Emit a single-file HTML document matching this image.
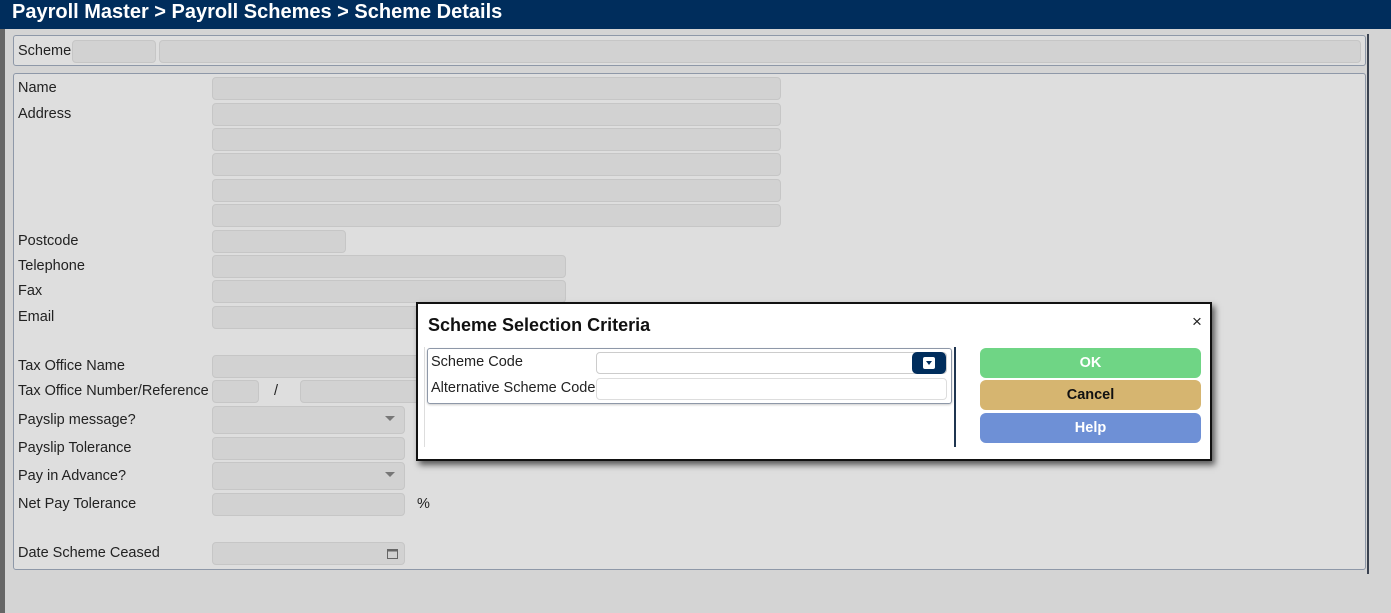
<!DOCTYPE html>
<html><head><meta charset="utf-8"><style>
*{box-sizing:border-box;margin:0;padding:0}
body{width:1391px;height:613px;background:#d4d4d4;font-family:"Liberation Sans",sans-serif;font-size:14.5px;color:#222;position:relative;overflow:hidden}
.a{position:absolute}
.hdr{left:0;top:0;width:1391px;height:29px;background:#002d5c;color:#fff;font-weight:bold;font-size:20px;padding:1px 0 0 12px}
.lstrip{left:0;top:29px;width:5px;height:584px;background:#666}
.vline{left:1367px;top:34px;width:2px;height:540px;background:#3a4250}
.box{background:#dedede;border:1px solid #8e98a8;border-radius:3px}
.f{position:absolute;background:#d2d2d2;border:1px solid #c6c6c6;border-radius:4px;height:23px}
.l{position:absolute;left:18px}
.arr{position:absolute;right:9px;top:9px;border-left:5px solid transparent;border-right:5px solid transparent;border-top:5px solid #777}
.dlg{left:416px;top:302px;width:796px;height:159px;background:#fff;border:2px solid #111;box-shadow:3px 4px 6px rgba(0,0,0,.6)}
.btn{position:absolute;left:562px;width:221px;height:30px;border-radius:6px;text-align:center;font-weight:bold;font-size:14.5px;line-height:30px}
</style></head><body>
<div class="a hdr">Payroll Master &gt; Payroll Schemes &gt; Scheme Details</div>
<div class="a lstrip"></div>
<div class="a vline"></div>
<div class="a box" style="left:13px;top:35px;width:1353px;height:31px"></div>
<div class="l" style="top:43px">Scheme</div>
<div class="f" style="left:72px;top:40px;width:84px"></div>
<div class="f" style="left:159px;top:40px;width:1202px"></div>
<div class="a box" style="left:13px;top:73px;width:1353px;height:497px"></div>
<div class="l" style="top:80px">Name</div>
<div class="l" style="top:106px">Address</div>
<div class="f" style="left:212px;top:77px;width:569px"></div>
<div class="f" style="left:212px;top:103px;width:569px"></div>
<div class="f" style="left:212px;top:128px;width:569px"></div>
<div class="f" style="left:212px;top:153px;width:569px"></div>
<div class="f" style="left:212px;top:179px;width:569px"></div>
<div class="f" style="left:212px;top:204px;width:569px"></div>
<div class="l" style="top:233px">Postcode</div>
<div class="f" style="left:212px;top:230px;width:134px"></div>
<div class="l" style="top:258px">Telephone</div>
<div class="f" style="left:212px;top:255px;width:354px"></div>
<div class="l" style="top:283px">Fax</div>
<div class="f" style="left:212px;top:280px;width:354px"></div>
<div class="l" style="top:309px">Email</div>
<div class="f" style="left:212px;top:306px;width:354px"></div>
<div class="l" style="top:358px">Tax Office Name</div>
<div class="f" style="left:212px;top:355px;width:354px"></div>
<div class="l" style="top:383px">Tax Office Number/Reference</div>
<div class="f" style="left:212px;top:380px;width:47px"></div>
<div class="a" style="left:274px;top:383px">/</div>
<div class="f" style="left:300px;top:380px;width:266px"></div>
<div class="l" style="top:412px">Payslip message?</div>
<div class="f" style="left:212px;top:406px;width:193px;height:28px"><div class="arr"></div></div>
<div class="l" style="top:440px">Payslip Tolerance</div>
<div class="f" style="left:212px;top:437px;width:193px"></div>
<div class="l" style="top:468px">Pay in Advance?</div>
<div class="f" style="left:212px;top:462px;width:193px;height:28px"><div class="arr"></div></div>
<div class="l" style="top:496px">Net Pay Tolerance</div>
<div class="f" style="left:212px;top:493px;width:193px"></div>
<div class="a" style="left:417px;top:496px">%</div>
<div class="l" style="top:545px">Date Scheme Ceased</div>
<div class="f" style="left:212px;top:542px;width:193px"><svg style="position:absolute;right:6px;top:5px" width="11" height="11" viewBox="0 0 11 11"><rect x="0.5" y="1.5" width="10" height="9" fill="none" stroke="#666"/><rect x="0.5" y="1.5" width="10" height="2" fill="#666"/></svg></div>

<div class="a dlg">
<div class="a" style="left:10px;top:11px;font-weight:bold;font-size:18px;color:#111">Scheme Selection Criteria</div>
<div class="a" style="left:774px;top:8px;font-size:17px">×</div>
<div class="a" style="left:6px;top:43px;width:1px;height:100px;background:#ddd"></div>
<div class="a" style="left:536px;top:43px;width:2px;height:100px;background:#1f3550"></div>
<div class="a" style="left:9px;top:44px;width:525px;height:56px;border:1px solid #8e98a8;border-radius:3px;box-shadow:0 1px 2px rgba(0,0,0,.2)"></div>
<div class="a" style="left:13px;top:50px">Scheme Code</div>
<div class="a" style="left:13px;top:76px">Alternative Scheme Code</div>
<div class="a" style="left:178px;top:48px;width:351px;height:22px;border:1px solid #ccc;border-radius:4px"></div>
<div class="a" style="left:494px;top:48px;width:34px;height:22px;background:#002d5c;border-radius:5px"><div style="position:absolute;left:11px;top:5px;width:12px;height:12px;background:#fff;border-radius:2px"><div style="position:absolute;left:3px;top:4px;border-left:3px solid transparent;border-right:3px solid transparent;border-top:4px solid #002d5c"></div></div></div>
<div class="a" style="left:178px;top:74px;width:351px;height:22px;border:1px solid #ddd;border-radius:4px"></div>
<div class="btn" style="top:44px;background:#6fd585;color:#fff">OK</div>
<div class="btn" style="top:76px;background:#d6b570;color:#111">Cancel</div>
<div class="btn" style="top:109px;background:#6e90d6;color:#fff">Help</div>
</div>
</body></html>
